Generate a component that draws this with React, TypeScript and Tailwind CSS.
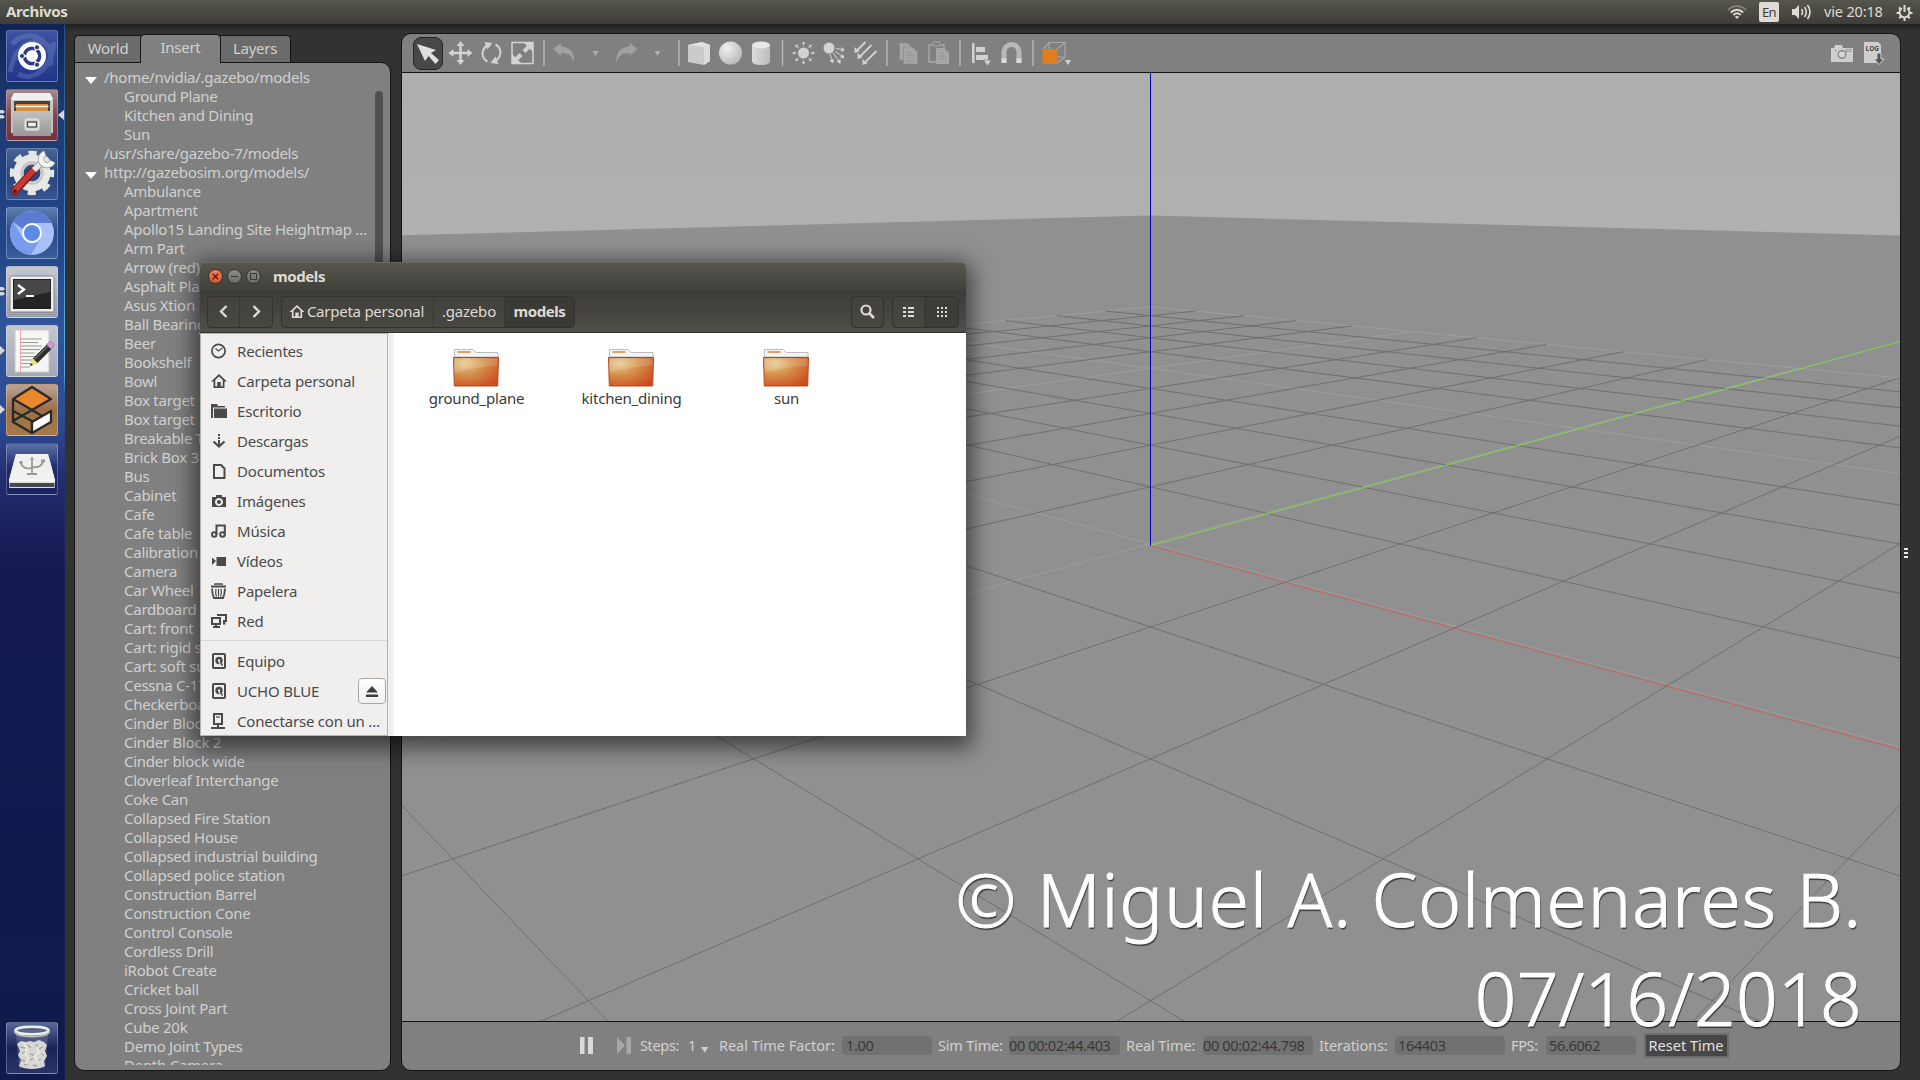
import React from "react";

/* ---------- 3D viewport ---------- */

const VIEW_W = 1498;
const VIEW_H = 950;
const FOCAL = 1297;
const CX = 748.5;
const CY = 472.6;
const PITCH = Math.atan2(2, Math.SQRT2 * 5);

type P3 = [number, number, number];

function toCamera([x, y, z]: P3): P3 {
  const forward = (-(x - 5) + (y + 5)) / Math.SQRT2;
  const right = (x + y) / Math.SQRT2;
  const up = z - 2;
  const depth = forward * Math.cos(PITCH) - up * Math.sin(PITCH);
  const v = forward * Math.sin(PITCH) + up * Math.cos(PITCH);
  return [right, v, depth];
}

function project(p: P3): [number, number] {
  return [CX + (FOCAL * p[0]) / p[2], CY - (FOCAL * p[1]) / p[2]];
}

function segment(a: P3, b: P3) {
  let p = toCamera(a);
  let q = toCamera(b);
  const near = 0.3;
  if (p[2] < near && q[2] < near) return "";
  if (p[2] < near) [p, q] = [q, p];
  if (q[2] < near) {
    const t = (p[2] - near) / (p[2] - q[2]);
    q = [p[0] + (q[0] - p[0]) * t, p[1] + (q[1] - p[1]) * t, near];
  }
  const s = project(p);
  const e = project(q);
  return `M${s[0].toFixed(2)} ${s[1].toFixed(2)}L${e[0].toFixed(2)} ${e[1].toFixed(2)}`;
}

function gridPath(major: boolean) {
  let d = "";
  for (let i = -10; i <= 10; i++) {
    if ((i % 5 === 0) !== major) continue;
    d += segment([i, -10, 0.01], [i, 10, 0.01]);
    d += segment([-10, i, 0.01], [10, i, 0.01]);
  }
  return d;
}

function groundOutline() {
  const far = project(toCamera([-50, 50, 0]));
  const l = project(toCamera([-50, -30, 0]));
  const r = project(toCamera([30, 50, 0]));
  return `M${far[0]} ${far[1] + 1}L${r[0]} ${r[1] + 1}L${VIEW_W + 900} ${VIEW_H + 50}L-900 ${VIEW_H + 50}L${l[0]} ${l[1] + 1}Z`;
}

function Viewport() {
  return (
    <div className="h-[950px] shrink-0 overflow-hidden border-y border-[#141414] bg-[#b0b0b0]">
      <svg width={VIEW_W} height={VIEW_H} viewBox={`0 0 ${VIEW_W} ${VIEW_H}`} fill="none">
        <defs>
          <linearGradient id="sky" x1="0" y1="0" x2="0" y2="1">
            <stop offset="0" stopColor="#aeaeae" />
            <stop offset="0.2" stopColor="#b1b1b1" />
          </linearGradient>
        </defs>
        <rect width={VIEW_W} height={VIEW_H} fill="url(#sky)" />
        <path d={groundOutline()} fill="#909090" />
        <path d={gridPath(true)} stroke="#9e9e9e" strokeWidth="1" />
        <path d={gridPath(false)} stroke="#6e6e6e" strokeWidth="1" />
        <path d={segment([0, 0, 0], [10, 0, 0])} stroke="#d05c58" strokeWidth="0.9" />
        <path d={segment([0, 0, 0], [0, 40, 0])} stroke="#83d84f" strokeWidth="1" />
        <path d={`M${CX} 0V${CY}`} stroke="#0000c4" strokeWidth="1" />
      </svg>
    </div>
  );
}

/* ---------- top bar ---------- */

function TopBar() {
  return (
    <header className="flex h-6 items-center bg-gradient-to-b from-[#57564c] to-[#3e3d38] pr-[7px] pl-[6px] text-[#dfdbd2]">
      <span className="-mt-[2px] text-[15px] font-bold tracking-[-0.35px]">Archivos</span>
      <div className="ml-auto flex items-center">
        <svg width="20" height="16" viewBox="0 0 20 16" fill="none" strokeWidth="1.8" className="mr-3">
          <path d="M1 6.2C6 .8 14 .8 19 6.2" stroke="#85837b" />
          <path d="M3.8 8.5C7.5 4.8 12.500 4.800 16.200 8.500M6.300 11C8.500 8.900 11.500 8.900 13.700 11" stroke="#dfdbd2" />
          <path d="M7.800 12.800Q10 11 12.200 12.800L10 15z" fill="#dfdbd2" />
        </svg>
        <span className="mr-[13px] flex h-5 w-5 items-center justify-center rounded-[2px] bg-[#dfdbd2] text-[13px] tracking-[-0.7px] text-[#3c3b37]">En</span>
        <svg width="20" height="16" viewBox="0 0 20 16" fill="none" stroke="#dfdbd2" strokeWidth="1.600" className="mr-3">
          <path d="M0 5h3l4-4v14l-4-4H0z" fill="#dfdbd2" stroke="none" />
          <path d="M9.500 5Q11.500 8 9.500 11M12.500 3Q16 8 12.500 13M15.500 1Q20.500 8 15.500 15" />
        </svg>
        <span className="-mt-[2px] mr-3 w-[60px] text-[14.500px] tracking-[-0.15px] whitespace-nowrap">vie 20:18</span>
        <svg width="17" height="17" viewBox="0 0 17 17" fill="none" stroke="#dfdbd2" strokeWidth="2">
          <path d="M5.800 4.200A5 5 0 1 0 11.200 4.200M8.500 1v7" />
          <path d="M4.500 5 3 3.300M12.500 5 14 3.300M3.500 9H.500M13.500 9h3M5 12.500 3.200 14.300M12 12.500l1.800 1.800M8.500 14v3" />
        </svg>
      </div>
    </header>
  );
}

/* ---------- launcher ---------- */

function UbuntuIcon() {
  return (
    <g>
      <path d="M4 42C10 10 34 4 46 20M48 12C46 40 26 52 12 44M6 14C22-4 50 10 44 36" stroke="#8797d2" strokeWidth="5" strokeOpacity=".3" fill="none" />
      <circle cx="26" cy="26" r="14" fill="#fff" />
      <circle cx="26" cy="26" r="7.600" fill="none" stroke="#2b3d80" strokeWidth="3.600" />
      <path d="M26 26H13M26 26l6.500-11M26 26l6.500 11" stroke="#fff" strokeWidth="1.500" />
      <circle cx="26" cy="26" r="5.800" fill="#fff" />
      <g fill="#2b3d80" stroke="#fff" strokeWidth="1">
        <circle cx="16" cy="26" r="2.600" />
        <circle cx="31" cy="17.300" r="2.600" />
        <circle cx="31" cy="34.700" r="2.600" />
      </g>
    </g>
  );
}

function CabinetIcon() {
  return (
    <g>
      <path d="M8 4h36l3 5v35H5V9z" fill="#c9c9c7" />
      <path d="M8 4h36l3 7H5z" fill="#efefed" />
      <rect x="8" y="12" width="36" height="12" fill="#45413c" />
      <path d="M10 15h32v8H10z" fill="#d98a3e" />
      <path d="M9.500 17.500h33" stroke="#fff6e0" strokeWidth="1.500" />
      <path d="M6 22h40l-1 25H7z" fill="url(#steel)" />
      <rect x="19" y="30" width="14" height="11" rx="2" fill="#cfcfcd" stroke="#efefef" />
      <rect x="21.500" y="33" width="9" height="5" fill="#eee" stroke="#4a4a4a" strokeWidth="1.300" />
    </g>
  );
}

function GearWrenchIcon() {
  return (
    <g>
      <circle cx="26" cy="25" r="20" fill="none" stroke="#e4e4e2" strokeWidth="4.500" strokeDasharray="8.200 7.508" strokeDashoffset="4.100" />
      <circle cx="26" cy="25" r="13.500" fill="none" stroke="#e7e7e5" strokeWidth="10" />
      <circle cx="26" cy="25" r="10.500" fill="none" stroke="#c4c6ca" strokeWidth="2.500" />
      <path d="M9 43 29 21" stroke="#7d1f1c" strokeWidth="8" strokeLinecap="round" />
      <path d="M9 42.500 29 20.500" stroke="#c63a33" strokeWidth="5.500" strokeLinecap="round" />
      <circle cx="9" cy="43" r="1.800" fill="#5b1210" />
      <path d="M28 22 37 13" stroke="#9c9c9c" strokeWidth="6.500" />
      <path d="M28 22 37 13" stroke="#e6e6e6" strokeWidth="5" />
      <path d="M39 5.500A6 6 0 1 0 46.500 13.500" stroke="#9c9c9c" strokeWidth="6.200" fill="none" />
      <path d="M39 5.500A6 6 0 1 0 46.500 13.500" stroke="#f2f2f0" strokeWidth="4.600" fill="none" />
    </g>
  );
}

function ChromiumIcon() {
  return (
    <g>
      <circle cx="26" cy="26" r="22" fill="#a7c0f7" />
      <path d="M7 15A22 22 0 0 1 45.500 16H26a10 10 0 0 0-9 6z" fill="#5a7bd4" />
      <path d="M7 15A22 22 0 0 0 25 48l9.500-16.500A10 10 0 0 1 17 31z" fill="#789bee" />
      <circle cx="26" cy="26" r="10" fill="#fff" />
      <circle cx="26" cy="26" r="8" fill="#5c8ae8" />
    </g>
  );
}

function TerminalIcon() {
  return (
    <g>
      <rect x="4" y="10" width="44" height="36" rx="1.500" fill="#efefef" stroke="#808285" />
      <rect x="7" y="13" width="38" height="30" fill="#242424" />
      <path d="M8 14h36v12L8 34z" fill="#474747" />
      <path d="m12 19 6 4.500L12 28" stroke="#fff" strokeWidth="2.400" fill="none" />
      <path d="M20 30h8" stroke="#fff" strokeWidth="2" />
    </g>
  );
}

function EditorIcon() {
  return (
    <g>
      <rect x="9" y="5" width="34" height="42" fill="#f6f6f4" stroke="#c8c8c6" />
      <path d="M14.500 5v42" stroke="#e7a8a8" />
      <path d="M15 14h21M15 17.500h17M15 21h21M15 24.500h19M15 28h14M15 31.500h16M15 35h12M15 38.500h12M15 42h9" stroke="#8f8f8f" strokeWidth=".9" />
      <path d="M29 36 43 22" stroke="#2e2e2e" strokeWidth="6.500" />
      <path d="M28 35 42 21" stroke="#6b6b6b" strokeWidth="1.200" />
      <path d="m40.500 19.500 4-3.500 3.500 3.500-3 4.500z" fill="#d79ad0" stroke="#8c5e88" strokeWidth=".6" />
      <path d="m24 41 2-8 6 5.500z" fill="#ece27a" />
      <path d="m24 41 .8-3 2.200 2z" fill="#222" />
    </g>
  );
}

function GazeboIcon() {
  return (
    <g strokeLinejoin="round">
      <path d="M26 3 45 15 26 26 7 15z" fill="#e8872b" />
      <path d="M26 3 45 15 26 26 7 15zM7 15v23l19 11V37L7 27M7 37l19-11 10 6" stroke="#282828" strokeWidth="2.300" fill="none" />
      <path d="M26 38 45 27v11L26 49z" fill="#fff" stroke="#282828" strokeWidth="2.300" />
    </g>
  );
}

function DriveIcon() {
  return (
    <g>
      <path d="M10 11h32l7 26v7q0 1-1 1H4q-1 0-1-1v-7z" fill="#dededd" />
      <path d="M10 11h32l7 26H3z" fill="#f0f0ef" />
      <path d="M3.500 40h45v4h-45z" fill="#45484e" />
      <path d="M3 37.500h46" stroke="#fafafa" strokeWidth="2" />
      <path d="M26 15v16M21 31h10M15 20q2 7 11 5M37 18.500q-2 7-11 5.500" stroke="#9a9a9a" strokeWidth="1.800" fill="none" />
      <circle cx="15" cy="19.500" r="1.700" fill="#9a9a9a" />
      <path d="M35 16.500h4v3h-4zM24 16.500l2-3 2 3z" fill="#9a9a9a" />
    </g>
  );
}

function TrashIcon() {
  return (
    <g>
      <path d="M10 12h32l-3 34H13z" fill="#c7cfe6" fillOpacity=".2" />
      <path d="m11 22 4-3 5 1 4-1 4 1 5-2 5 2 3 3-2 6 2 5-3 5 1 5q-5 3-13 3t-13-3l2-6-3-5 2-4z" fill="#d6d6d3" />
      <path d="m14 25 5 1M22 23l3 3M31 22l-1 4M37 25l-4 2M16 31l4-1M24 32l4 1M35 32l3 1M15 38l4 1M23 38l4-1M31 39l4-2M18 43l4-1M27 43l4 1" stroke="#a6a6a2" strokeWidth="1.300" fill="none" />
      <path d="m18 22 3 5-2 5 4 5-3 5M30 25l3 5-4 4 3 6" stroke="#f0f0ee" strokeWidth="1.200" fill="none" />
      <ellipse cx="26" cy="8.500" rx="16.500" ry="3.800" stroke="#efefed" strokeWidth="2.600" fill="#5a648c" />
      <path d="M8.500 9.500q2 5 17.500 5t17.500-5" stroke="#bdbebb" strokeWidth="1.800" fill="none" />
    </g>
  );
}

type LaunchItem = { tile: string; icon: React.ReactNode; pips?: number; active?: boolean };

const launcherItems: LaunchItem[] = [
  { tile: "bg-gradient-to-b from-[#3d52a0] to-[#22358b]", icon: <UbuntuIcon /> },
  { tile: "bg-gradient-to-b from-[#a2888f] via-[#834650] to-[#74303f]", icon: <CabinetIcon />, pips: 2, active: true },
  { tile: "bg-gradient-to-b from-[#4a6396] via-[#2c4682] to-[#35538f]", icon: <GearWrenchIcon /> },
  { tile: "bg-gradient-to-b from-[#5b7cae] via-[#2c4a88] to-[#3a5e9c]", icon: <ChromiumIcon /> },
  { tile: "bg-gradient-to-b from-[#c3c7d0] to-[#9a9eab]", icon: <TerminalIcon />, pips: 2 },
  { tile: "bg-gradient-to-b from-[#c3c7d0] to-[#a4a7b4]", icon: <EditorIcon />, pips: 1 },
  { tile: "bg-gradient-to-b from-[#b8a296] via-[#9c7046] to-[#a87a48]", icon: <GazeboIcon />, pips: 1 },
  { tile: "bg-gradient-to-b from-[#5b70a4] via-[#1f2b6a] to-[#1d2262]", icon: <DriveIcon /> },
];

function LauncherTile({ tile, icon, pips, active }: LaunchItem) {
  return (
    <div className="relative h-[52px] w-full pl-[6px]">
      <div className={`h-[52px] w-[52px] overflow-hidden rounded-[3px] border border-white/25 ${tile}`}>
        <svg width="52" height="52" viewBox="0 0 52 52" className="-m-px">
          {icon}
        </svg>
      </div>
      {pips === 2 && (
        <svg className="absolute top-[21px] left-0" width="5" height="9" viewBox="0 0 5 9">
          <path d="M0 0h3l2 2-2 1.500H0zM0 5h3l2 2-2 1.500H0z" fill="#d8d8d8" />
        </svg>
      )}
      {pips === 1 && (
        <svg className="absolute top-[21px] left-0" width="5" height="9" viewBox="0 0 5 9">
          <path d="M0 0 5 4.500 0 9z" fill="#d8d8d8" />
        </svg>
      )}
      {active && (
        <svg className="absolute top-[21px] right-0" width="6" height="10" viewBox="0 0 6 10">
          <path d="M6 0 0 5l6 5z" fill="#d8d8d8" />
        </svg>
      )}
    </div>
  );
}

function Launcher() {
  return (
    <>
      <nav className="flex w-[64px] flex-col gap-[7px] bg-[linear-gradient(180deg,#0f2454_0px,#1b3a70_80px,#23468a_220px,#2f5598_300px,#2c4b93_400px,#232f72_450px,#171a54_530px,#111a50_800px,#0f1b4c_1056px)] pt-[6px]">
        {launcherItems.map((item, i) => (
          <LauncherTile key={i} {...item} />
        ))}
        <div className="mt-auto pb-[6px]">
          <LauncherTile tile="bg-gradient-to-b from-[#5c6899] via-[#1a2458] to-[#2a3467]" icon={<TrashIcon />} />
        </div>
      </nav>
      <div className="w-px bg-[linear-gradient(180deg,#2a4f86_0px,#3c74b8_150px,#5aa6e0_300px,#5aa6e0_350px,#2f5aa0_370px,#27337a_440px,#141c50_560px)]" />
    </>
  );
}

/* ---------- model tree ---------- */

const remoteModels = [
  "Ambulance", "Apartment", "Apollo15 Landing Site Heightmap …", "Arm Part", "Arrow (red)", "Asphalt Plane",
  "Asus Xtion", "Ball Bearing", "Beer", "Bookshelf", "Bowl", "Box target", "Box target", "Breakable Test",
  "Brick Box 3", "Bus", "Cabinet", "Cafe", "Cafe table", "Calibration", "Camera", "Car Wheel", "Cardboard",
  "Cart: front", "Cart: rigid s", "Cart: soft su", "Cessna C-17", "Checkerboard", "Cinder Block", "Cinder Block 2",
  "Cinder block wide", "Cloverleaf Interchange", "Coke Can", "Collapsed Fire Station", "Collapsed House",
  "Collapsed industrial building", "Collapsed police station", "Construction Barrel", "Construction Cone",
  "Control Console", "Cordless Drill", "iRobot Create", "Cricket ball", "Cross Joint Part", "Cube 20k",
  "Demo Joint Types", "Depth Camera",
];

function TreeRow({ label, root, open }: { label: string; root?: boolean; open?: boolean }) {
  return (
    <li className="flex h-[19px] shrink-0 items-center whitespace-nowrap">
      <span className={root ? "flex w-[29px] pl-[10px]" : "w-[49px]"}>
        {open && (
          <svg width="12" height="7" viewBox="0 0 12 7" className="mt-[5px]">
            <path d="M0 0h12L6 7z" fill="#fff" />
          </svg>
        )}
      </span>
      {label}
    </li>
  );
}

function ModelPanel() {
  return (
    <aside className="flex w-[317px] flex-col text-[15px] tracking-[-0.26px] text-[#d0d0d0]">
      <div className="flex h-[29px] items-end">
        <div className="flex h-[27px] w-[66px] items-center justify-center rounded-tl-[5px] border-t border-l border-[#141414] bg-[#6b6b6b] pb-[2px] pl-px">World</div>
        <div className="z-10 -mb-px flex h-[29px] w-[81px] items-center justify-center rounded-t-[5px] border border-b-0 border-[#141414] bg-[#808080] pb-[3px]">Insert</div>
        <div className="flex h-[27px] w-[70px] items-center justify-center rounded-tr-[4px] border-t border-r border-[#141414] bg-[#6b6b6b] pr-px pb-[2px]">Layers</div>
      </div>
      <div className="flex min-h-0 flex-1 rounded-[10px] rounded-tl-none border border-[#141414] bg-[#808080] pt-[5px] pb-[5px]">
        <ul className="flex min-w-0 flex-1 flex-col overflow-hidden">
          <TreeRow label="/home/nvidia/.gazebo/models" root open />
          <TreeRow label="Ground Plane" />
          <TreeRow label="Kitchen and Dining" />
          <TreeRow label="Sun" />
          <TreeRow label="/usr/share/gazebo-7/models" root />
          <TreeRow label="http://gazebosim.org/models/" root open />
          {remoteModels.map((m, i) => (
            <TreeRow key={i} label={m} />
          ))}
        </ul>
        <div className="mt-[23px] mr-[7px] h-[440px] w-2 rounded-full bg-[#505050]" />
      </div>
    </aside>
  );
}

/* ---------- simulator toolbar ---------- */

const Tri = () => <path d="M0 0h6L3 5z" />;

function ToolIcon({ w, children }: { w: number; children: React.ReactNode }) {
  return (
    <svg width={w} height="24" viewBox={`${-w / 2} -12 ${w} 24`} className="shrink-0" fill="#d2d2d2" stroke="none">
      {children}
    </svg>
  );
}

const Sep = ({ w }: { w: number }) => (
  <svg width={w} height="26" viewBox={`${-w / 2} 0 ${w} 26`} className="shrink-0">
    <path d="M0 0v26" stroke="#bdbdbd" strokeWidth="1.300" />
  </svg>
);

function Toolbar() {
  return (
    <div className="flex h-[38px] shrink-0 items-center pr-[15px] pl-[11px]">
      <div className="flex h-[33px] w-[30px] shrink-0 items-center justify-center rounded-[8px] border border-[#262626] bg-[#484848]">
        <svg width="24" height="24" viewBox="-12 -12 24 24" fill="#e0e0e0">
          <path d="M-11-9 8-3 3 0l8 7-3.500 4-7-8-3.500 5z" />
        </svg>
      </div>
      <span className="w-[2px]" />
      <ToolIcon w={31}>
        <path d="M0-12 4-7H1.300v5.700H7V-4l5 4-5 4V1.300H1.300V7H4L0 12-4 7h2.700V1.300H-7V4l-5-4 5-4v2.700h5.700V-7H-4z" />
      </ToolIcon>
      <ToolIcon w={31}>
        <path d="M-4 8.500A9 9 0 0 1-4-7.500M4-8.500A9 9 0 0 1 4 7.500" stroke="#d2d2d2" strokeWidth="2" fill="none" />
        <path d="m-7-11 8 1-5 6.500zM7 11l-8-1 5-6.500z" />
      </ToolIcon>
      <ToolIcon w={31}>
        <rect x="-10.500" y="-10.500" width="21" height="21" fill="none" stroke="#d2d2d2" strokeWidth="1.500" />
        <path d="M1.500-1.500 6-6M-1.500 1.500-6 6" stroke="#d2d2d2" strokeWidth="4" />
        <path d="M1-10.500h9.500V-1zM-1 10.500h-9.500V1z" />
      </ToolIcon>
      <Sep w={12} />
      <ToolIcon w={28}>
        <path d="m-11-4 8-6v3.500C7-6 11 0 10 10 8 3 5 0-3 0v3z" fill="#a0a0a0" />
      </ToolIcon>
      <ToolIcon w={35}>
        <g transform="translate(-3 -2)" fill="#b0b0b0"><Tri /></g>
      </ToolIcon>
      <ToolIcon w={27}>
        <path d="M11-4 3-10v3.500C-7-6-11 0-10 10-8 3-5 0 3 0v3z" fill="#a0a0a0" />
      </ToolIcon>
      <ToolIcon w={35}>
        <g transform="translate(-3 -2)" fill="#b0b0b0"><Tri /></g>
      </ToolIcon>
      <Sep w={8} />
      <ToolIcon w={32}>
        <path d="m-11-8 14-3 8 3V8L5 12-11 9z" fill="#cbcbcd" />
        <path d="m-11-8 14-3 8 3-6 2z" fill="#e2e2e2" />
        <path d="M5-6 11-8V8L5 12z" fill="#dcdcde" />
      </ToolIcon>
      <ToolIcon w={31}>
        <defs>
          <radialGradient id="ball" cx=".35" cy=".3" r=".8">
            <stop offset="0" stopColor="#f0f0f0" />
            <stop offset="1" stopColor="#b5b5b5" />
          </radialGradient>
        </defs>
        <circle r="11.500" fill="url(#ball)" />
      </ToolIcon>
      <ToolIcon w={30}>
        <defs>
          <linearGradient id="cyl">
            <stop offset="0" stopColor="#dcdcdc" />
            <stop offset="1" stopColor="#bcbcbc" />
          </linearGradient>
        </defs>
        <path d="M-9-8V8q0 4 9 4t9-4V-8z" fill="url(#cyl)" />
        <ellipse cy="-8" rx="9" ry="3.500" fill="#e6e6e6" />
      </ToolIcon>
      <Sep w={13} />
      <ToolIcon w={29}>
        <circle r="5.500" />
        {[0, 45, 90, 135, 180, 225, 270, 315].map((a) => (
          <path key={a} d="M-.4-7v-2H-1.800L0-11.500 1.800-9H.4v2z" transform={`rotate(${a})`} />
        ))}
      </ToolIcon>
      <ToolIcon w={32}>
        <circle cx="-5" cy="-5" r="5.500" />
        <path d="M2-4.500 8-3.500M1-1.500 8 3M-1 0 5 8M-4 1-2 7" stroke="#d2d2d2" strokeWidth="1" />
        <path d="m7.500-6 3.500 3-4 2zM9 1l1.500 4.500-4.500-1zM6.500 6v5L2.500 8.500zM0 6l-1 4.500-3.500-3z" />
      </ToolIcon>
      <ToolIcon w={31}>
        <path d="M0-11-8-3M6-8-5 3M11-2 0 9" stroke="#d2d2d2" strokeWidth="1.800" />
        <path d="M-11 0v-6l5 4.500zM-8 6V0l5 4.500zM-3 12V6l5 4.500z" />
      </ToolIcon>
      <Sep w={12} />
      <ToolIcon w={31}>
        <g fill="#a6a6a6" stroke="#8a8a8a" strokeWidth=".7">
          <path d="M-9-10h8l4 4V7H-9z" />
          <path d="M-5-6h9l5 5v12H-5z" />
          <path d="M-2-1h6M-2 2h8M-2 5h8M-2 8h8" />
        </g>
      </ToolIcon>
      <ToolIcon w={30}>
        <path d="M-10-8h15V9h-15z" fill="none" stroke="#a6a6a6" strokeWidth="1.500" />
        <rect x="-6" y="-11" width="7" height="4" rx="1" fill="#808080" stroke="#a6a6a6" />
        <path d="M-3-5h8l5 5v11H-3z" fill="#a6a6a6" />
        <path d="M0 0h5M0 3h7M0 6h7" stroke="#8a8a8a" strokeWidth=".8" />
      </ToolIcon>
      <Sep w={12} />
      <ToolIcon w={30}>
        <path d="M-9-10h2.500v20H-9zM-5-6h9v5h-9zM-5 2H7v5H-5z" />
        <g transform="translate(2.500 7)" stroke="#808080" strokeWidth=".7"><path d="M0 0h8L4 6z" /></g>
      </ToolIcon>
      <ToolIcon w={31}>
        <path d="M-7.500 10V-1a7.500 7.500 0 0 1 15 0v11" fill="none" stroke="#b8b8b8" strokeWidth="5" />
        <path d="M-10 5.500h5V10h-5zM5 5.500h5V10H5z" fill="#dadada" />
      </ToolIcon>
      <Sep w={12} />
      <ToolIcon w={34}>
        <path d="M-13-4-7-10.500H9V4L1 10M9-10.500 1-4M-7-10.500V4H9M-7 4l-6 6" stroke="#a9a9a9" fill="none" strokeWidth="1.200" />
        <rect x="-13.500" y="-4" width="15" height="15" fill="#dd7f1e" />
        <path d="M9 7h6l-3 5z" fill="#d2d2d2" />
      </ToolIcon>
      <svg width="24" height="19" viewBox="0 0 24 19" className="mr-[9px] ml-auto" fill="#cfcfcf">
        <path d="M1 4h3l1-3h7l1 3h10v14H1z" />
        <path d="M16 5.500h5v2h-5z" fill="none" stroke="#999" />
        <circle cx="12" cy="10.500" r="3.800" fill="#d8d8d8" stroke="#8b8b8b" strokeWidth="1.500" />
        <circle cx="5.500" cy="6.500" r=".8" fill="#8b8b8b" />
      </svg>
      <svg width="22" height="24" viewBox="0 0 22 24">
        <path d="M1 1h14l3 3v18H1z" fill="#cfcfcf" />
        <text x="2.500" y="9.500" fontSize="6.500" fontWeight="700" fill="#4a4a4a" fontFamily="Open Sans, sans-serif">LOG</text>
        <path d="M14 12h4v6h3l-5 5.500-5-5.500h3z" fill="#555" stroke="#cfcfcf" />
      </svg>
    </div>
  );
}

/* ---------- status bar ---------- */

function Field({ label, value, lw, fw, pad }: { label: string; value: string; lw: string; fw: string; pad: string }) {
  return (
    <>
      <span className={`${lw} shrink-0 whitespace-nowrap`}>{label}</span>
      <span className={`${fw} ${pad} mr-[6px] flex h-[19px] shrink-0 items-center rounded-[4px] bg-[#717171] whitespace-nowrap text-[#383838]`}>{value}</span>
    </>
  );
}

function StatusBar() {
  return (
    <div className="flex min-h-0 flex-1 items-center pb-[2px] pl-[178px] text-[14.500px] tracking-[-0.34px] text-[#d0d0d0]">
      <svg width="13" height="17" viewBox="0 0 13 17" className="mr-[24px]">
        <path d="M0 0h4.500v17H0zM8 0h5v17H8z" fill="#dadada" />
      </svg>
      <svg width="14" height="17" viewBox="0 0 14 17" className="mr-[9px]" fill="#a8a8a8">
        <path d="M0 0l8 8.500L0 17zM9.500 0H14v17H9.500z" />
      </svg>
      <span className="w-[48px] whitespace-nowrap">Steps:</span>
      <span className="w-[13px]">1</span>
      <svg width="8" height="6" viewBox="0 0 8 6" className="mt-[9px] mr-[10px]">
        <path d="M0 0h7.500L3.800 5.500z" fill="#d0d0d0" />
      </svg>
      <Field label="Real Time Factor:" value="1.00" lw="w-[123px] tracking-[-0.05px]" fw="w-[90px]" pad="pl-1" />
      <Field label="Sim Time:" value="00 00:02:44.403" lw="w-[71px] tracking-[-0.2px]" fw="w-[111px]" pad="pl-0" />
      <Field label="Real Time:" value="00 00:02:44.798" lw="w-[77px] tracking-[-0.1px]" fw="w-[110px]" pad="pl-0" />
      <Field label="Iterations:" value="164403" lw="w-[76px] tracking-[-0.1px]" fw="w-[110px]" pad="pl-[3px]" />
      <Field label="FPS:" value="56.6062" lw="w-[35px]" fw="w-[90px]" pad="pl-[3px]" />
      <span className="ml-[2px] flex h-[25px] w-[85px] items-center justify-center border-2 border-[#6d6d6d] bg-[#474747] pr-px tracking-[0px] whitespace-nowrap text-[#e0e0e0]">
        Reset Time
      </span>
    </div>
  );
}

/* ---------- file manager ---------- */

const HomeShape = () => (
  <path d="M8 1 0 8.500h2.500V15h11V8.500H16zM8 3.500l3.700 3.500v6.200H9.800V9H6.200v4.200H4.300V7z" fillRule="evenodd" />
);

function DiskShape() {
  return (
    <g>
      <rect x="2" y="1" width="12" height="14" rx="1" fill="none" stroke="currentColor" strokeWidth="2" />
      <circle cx="8" cy="7.500" r="3.700" />
      <circle cx="8" cy="7.500" r="1.200" fill="#f0efee" />
      <path d="m8 9 3.500 4" stroke="#f0efee" strokeWidth="1.500" />
      <path d="m9.500 9.500 2 3" stroke="currentColor" strokeWidth="1.500" />
    </g>
  );
}

const places: { label: string; icon: React.ReactNode }[] = [
  {
    label: "Recientes",
    icon: (
      <g fill="none" stroke="currentColor">
        <circle cx="7.500" cy="8" r="6.600" strokeWidth="1.700" />
        <path d="m4.500 5.500 3 2.500 4-3" strokeWidth="1.300" />
      </g>
    ),
  },
  { label: "Carpeta personal", icon: <HomeShape /> },
  { label: "Escritorio", icon: <path d="M0 1h6l1 2h7v1.500H2V15H0zM3 5.500h13V15H3z" /> },
  {
    label: "Descargas",
    icon: (
      <g>
        <path d="M7 1h2v2H7zM7 4h2v2H7zM7 7h2v5H7z" />
        <path d="m2.500 8.500 5.500 5 5.500-5" fill="none" stroke="currentColor" strokeWidth="2.200" />
      </g>
    ),
  },
  { label: "Documentos", icon: <path d="M3 2h7l3.500 3.500V15H3z" fill="none" stroke="currentColor" strokeWidth="2" /> },
  {
    label: "Imágenes",
    icon: <path d="M1 4h4V2h6v2h4v10H1zM8 5a4 4 0 1 0 .01 0zM8 7a2 2 0 1 1-.01 0z" fillRule="evenodd" />,
  },
  {
    label: "Música",
    icon: (
      <g fill="none" stroke="currentColor" strokeWidth="2">
        <circle cx="3.200" cy="11.500" r="2.300" />
        <circle cx="11.500" cy="11.500" r="2.300" />
        <path d="M5.500 11.500V2.500h8.300v9" />
      </g>
    ),
  },
  { label: "Vídeos", icon: <path d="M1 4.500 5 8l-4 4zM5.500 4h9.500v9H5.500z" /> },
  {
    label: "Papelera",
    icon: (
      <g fill="none" stroke="currentColor">
        <path d="M0 3.500h15" strokeWidth="2" />
        <path d="M4 2V1h7v1" strokeWidth="1.500" />
        <path d="M1.300 5.500q-.5 5 1.700 9.500h9q2.200-4.500 1.700-9.500" strokeWidth="1.800" />
        <path d="M5 6q-1 4 .5 7.500M7.500 6v7.500M10 6q1 4-.5 7.500" strokeWidth="1.200" />
      </g>
    ),
  },
  {
    label: "Red",
    icon: (
      <g fill="none" stroke="currentColor" strokeWidth="2">
        <rect x="1" y="5" width="8" height="6" />
        <path d="M7 3V2h8v6h-3M2 14h7M12 10.500h2.500M5 11v3M13 8v3" />
      </g>
    ),
  },
];

const devices: { label: string; eject?: boolean; icon: React.ReactNode }[] = [
  { label: "Equipo", icon: <DiskShape /> },
  { label: "UCHO BLUE", eject: true, icon: <DiskShape /> },
  {
    label: "Conectarse con un …",
    icon: (
      <g fill="none" stroke="currentColor" strokeWidth="2">
        <path d="M3 1h8v10H3zM7 11v4M0 15h14" />
        <path d="M5 4h4" strokeWidth="1.200" />
      </g>
    ),
  },
];

function PlaceRow({ label, icon, eject }: { label: string; icon: React.ReactNode; eject?: boolean }) {
  return (
    <li className="flex h-[30px] shrink-0 items-center pl-[10px] whitespace-nowrap">
      <svg width="16" height="16" viewBox="0 0 16 16" fill="currentColor" className="mr-[10px] shrink-0">
        {icon}
      </svg>
      {label}
      {eject && (
        <span className="mr-px ml-auto flex h-[26px] w-7 items-center justify-center rounded-[4px] border border-[#a9a8a6] bg-gradient-to-b from-white to-[#f1f0ef]">
          <svg width="12" height="11" viewBox="0 0 12 11" fill="#3c3c3c">
            <path d="M6 0 12 6.500H0zM0 8.500h12V11H0z" />
          </svg>
        </span>
      )}
    </li>
  );
}

function Folder({ label }: { label: string }) {
  return (
    <div className="flex w-[155px] flex-col items-center">
      <svg width="46" height="39" viewBox="0 0 46 39" className="-ml-[2px]">
        <defs>
          <radialGradient id="folderFill" cx=".25" cy=".2" r=".95">
            <stop offset="0" stopColor="#e6c98c" />
            <stop offset=".45" stopColor="#d48e4b" />
            <stop offset="1" stopColor="#cb4a20" />
          </radialGradient>
        </defs>
        <path d="M1.500 9V1.500h18.500l3 3h22V9z" fill="#f4f4f4" stroke="#bcbcbc" />
        <path d="M4.500 4h13" stroke="#e09e6c" strokeWidth="2" />
        <path d="M.5 9.500h45l-.8 28.500H1.300z" fill="url(#folderFill)" stroke="#b5481f" />
        <path d="M1.500 10.500h43v7Q20 19 1.500 25z" fill="#fff" fillOpacity=".16" />
      </svg>
      <span className="mt-px text-[15px] leading-[20px] text-[#3a3a3a]">{label}</span>
    </div>
  );
}

const headerBtn = "flex items-center justify-center border-[#383732]";

function FileManager() {
  return (
    <section className="absolute top-[262px] left-[200px] flex h-[474px] w-[766px] flex-col overflow-hidden rounded-t-[6px] text-[15px] tracking-[-0.2px] shadow-[0_6px_22px_6px_rgba(0,0,0,0.55)]">
      <div className="flex h-[29px] shrink-0 items-center border-t border-[#6a695f] bg-gradient-to-b from-[#57564d] to-[#413f3a] pb-px pl-2 text-[#dfdbd2]">
        <div className="mr-[12px] flex gap-[4px]">
          <span className="flex h-[15px] w-[15px] items-center justify-center rounded-full border border-[#33312c] bg-gradient-to-b from-[#f2805c] to-[#d9542a]">
            <svg width="7" height="7" viewBox="0 0 7 7" stroke="#51200f" strokeWidth="1.300"><path d="m.8.8 5.400 5.400M6.200.8.800 6.200" /></svg>
          </span>
          <span className="flex h-[15px] w-[15px] items-center justify-center rounded-full border border-[#33312c] bg-gradient-to-b from-[#8c8b83] to-[#6c6b64]">
            <span className="h-px w-[7px] bg-[#3a3935]" />
          </span>
          <span className="flex h-[15px] w-[15px] items-center justify-center rounded-full border border-[#33312c] bg-gradient-to-b from-[#8c8b83] to-[#6c6b64]">
            <span className="h-[7px] w-[7px] border border-[#3a3935]" />
          </span>
        </div>
        <span className="-mt-px font-bold tracking-[-0.4px]">models</span>
      </div>
      <div className="flex h-[42px] shrink-0 items-center border-b border-[#33322e] bg-gradient-to-b from-[#3c3b37] to-[#504e48] pr-[7px] pl-[7px] text-[#dfdbd2]">
        <div className="mr-[8px] flex h-8 rounded-[4px] border border-[#33322e] bg-[#46453f]/60">
          <span className={`${headerBtn} w-8 border-r`}>
            <svg width="9" height="13" viewBox="0 0 9 13" fill="none" stroke="currentColor" strokeWidth="2.400"><path d="M7.500 1 2 6.500 7.500 12" /></svg>
          </span>
          <span className={`${headerBtn} w-8`}>
            <svg width="9" height="13" viewBox="0 0 9 13" fill="none" stroke="currentColor" strokeWidth="2.400"><path d="M1.500 1 7 6.500 1.500 12" /></svg>
          </span>
        </div>
        <div className="flex h-8 overflow-hidden rounded-[4px] border border-[#33322e] bg-[#46453f]/60">
          <span className={`${headerBtn} w-[152px] gap-[2px] border-r pr-[2px] tracking-[-0.25px] whitespace-nowrap`}>
            <svg width="16" height="15" viewBox="0 0 16 16" fill="currentColor"><HomeShape /></svg>
            Carpeta personal
          </span>
          <span className={`${headerBtn} w-[71px] border-r`}>.gazebo</span>
          <span className={`${headerBtn} w-[69px] bg-[#3b3a36] font-bold tracking-[-0.4px]`}>models</span>
        </div>
        <span className="mr-[8px] ml-auto flex h-8 w-[33px] items-center justify-center rounded-[4px] border border-[#33322e] bg-[#46453f]/60">
          <svg width="15" height="15" viewBox="0 0 15 15" fill="none" stroke="currentColor" strokeWidth="2.200">
            <circle cx="6" cy="6" r="4.500" />
            <path d="m9.500 9.500 4.500 4.500" strokeWidth="2.600" />
          </svg>
        </span>
        <div className="flex h-8 overflow-hidden rounded-[4px] border border-[#33322e] bg-[#46453f]/60">
          <span className={`${headerBtn} w-8 border-r`}>
            <svg width="11" height="10" viewBox="0 0 11 10" fill="currentColor">
              <path d="M0 0h3v2H0zM5 0h6v2H5zM0 4h3v2H0zM5 4h6v2H5zM0 8h3v2H0zM5 8h6v2H5z" />
            </svg>
          </span>
          <span className={`${headerBtn} w-[33px] bg-[#3d3c38]`}>
            <svg width="10" height="10" viewBox="0 0 10 10" fill="currentColor">
              <path d="M0 0h2v2H0zM4 0h2v2H4zM8 0h2v2H8zM0 4h2v2H0zM4 4h2v2H4zM8 4h2v2H8zM0 8h2v2H0zM4 8h2v2H4zM8 8h2v2H8z" />
            </svg>
          </span>
        </div>
      </div>
      <div className="flex min-h-0 flex-1 bg-white">
        <div className="flex w-[188px] shrink-0 flex-col border border-[#b3b2b0] bg-[#f0efee] pt-[2px] text-[#4a4a4a]">
          <ul>
            {places.map((p) => (
              <PlaceRow key={p.label} {...p} />
            ))}
          </ul>
          <div className="mt-[4px] mb-[5px] h-px shrink-0 bg-[#d6d5d3]" />
          <ul>
            {devices.map((p) => (
              <PlaceRow key={p.label} {...p} />
            ))}
          </ul>
        </div>
        <div className="w-[6px] shrink-0 bg-[#f0efee]" />
        <div className="flex flex-1 items-start pt-[15px] pl-[5px]">
          <Folder label="ground_plane" />
          <Folder label="kitchen_dining" />
          <Folder label="sun" />
        </div>
      </div>
    </section>
  );
}

/* ---------- page ---------- */

export default function App() {
  return (
    <div className="relative flex h-[1080px] w-[1920px] flex-col overflow-hidden bg-[#323232] font-['Noto_Sans',sans-serif] leading-none">
      <svg width="0" height="0" className="absolute">
        <defs>
          <linearGradient id="steel" x1="0" y1="0" x2="0" y2="1">
            <stop offset="0" stopColor="#c2c2c0" />
            <stop offset="1" stopColor="#979795" />
          </linearGradient>
        </defs>
      </svg>
      <TopBar />
      <div className="flex min-h-0 flex-1">
        <Launcher />
        <main className="flex flex-1 bg-[linear-gradient(180deg,#1e1e1e_0px,#323232_8px)] pt-[9px] pb-[9px] pl-[9px]">
          <ModelPanel />
          <div className="ml-[10px] flex w-[1500px] flex-col overflow-hidden rounded-[10px] border border-[#141414] bg-[#808080]">
            <Toolbar />
            <Viewport />
            <StatusBar />
          </div>
          <div className="ml-[3px] flex flex-col gap-[2px] pt-[515px]">
            <span className="h-[2px] w-1 bg-[#e8e8e8]" />
            <span className="h-[2px] w-1 bg-[#e8e8e8]" />
            <span className="h-[2px] w-1 bg-[#e8e8e8]" />
          </div>
        </main>
      </div>
      <FileManager />
      <div className="absolute right-[58px] bottom-[33px] text-right font-['Noto_Sans',sans-serif] text-[73px] leading-[99px] font-light whitespace-nowrap text-white [-webkit-text-stroke:1px_white] [text-shadow:1px_2px_1px_rgba(0,0,0,0.6)]">
        <p className="tracking-[0.95px]">© Miguel A. Colmenares B.</p>
        <p className="tracking-[0.3px]">07/16/2018</p>
      </div>
    </div>
  );
}
